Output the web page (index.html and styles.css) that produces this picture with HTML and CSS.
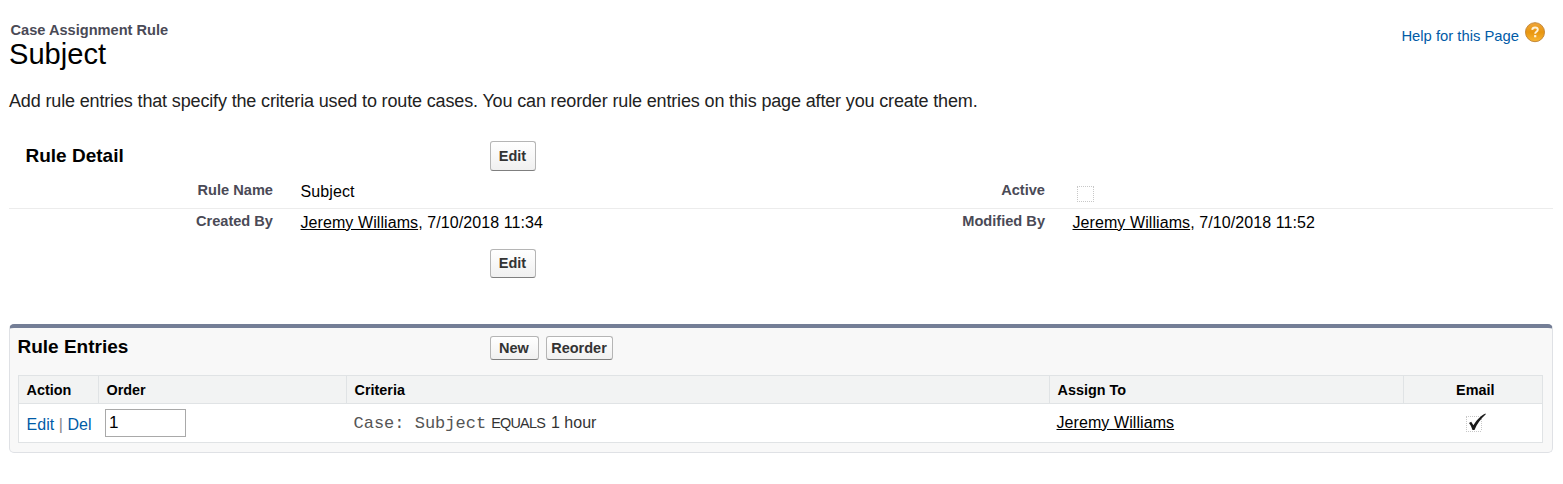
FILE: index.html
```html
<!DOCTYPE html>
<html lang="en">
<head>
<meta charset="utf-8">
<title>Case Assignment Rule: Subject</title>
<link rel="stylesheet" href="styles.css">
</head>
<body>
<header class="page-header">
  <div>
    <div class="page-type">Case Assignment Rule</div>
    <h1 class="page-title">Subject</h1>
  </div>
  <a class="help" href="#"><span class="help-text">Help for this Page</span>
    <svg class="help-icon" width="22" height="22" viewBox="0 0 22 22">
      <defs>
        <linearGradient id="orb" x1="0" y1="0" x2="0" y2="1">
          <stop offset="0" stop-color="#f0a63a"/><stop offset=".5" stop-color="#e8960f"/><stop offset="1" stop-color="#f9b634"/>
        </linearGradient>
      </defs>
      <circle cx="11" cy="11.2" r="9.5" fill="url(#orb)" stroke="#c4883a" stroke-width="1"/>
      <path d="M8.200 8.900C8.400 7.200 9.500 6.500 11 6.500c1.700 0 2.800.9 2.800 2.300 0 2-2.600 2-2.600 3.900" fill="none" stroke="#fff3da" stroke-width="1.900"/>
      <rect x="10.100" y="14.100" width="2.200" height="2.200" fill="#fff3da"/>
    </svg>
  </a>
</header>
<p class="intro">Add rule entries that specify the criteria used to route cases. You can reorder rule entries on this page after you create them.</p>

<section class="detail">
  <div class="detail-head">
    <h2 class="section-title">Rule Detail</h2>
    <button class="btn btn-edit">Edit</button>
  </div>
  <div class="detail-row ruled">
    <div class="label">Rule Name</div><div class="value subject">Subject</div>
    <div class="label">Active</div><div class="value">
      <svg class="box" width="17" height="16" viewBox="0 0 17 16"><path d="M0 .5H17M0 15.500H17M.5 1V15M16.500 1V15" class="dotted"/></svg>
    </div>
  </div>
  <div class="detail-row">
    <div class="label">Created By</div><div class="value dated"><a class="person" href="#">Jeremy Williams</a>, 7/10/2018 11:34</div>
    <div class="label">Modified By</div><div class="value dated"><a class="person" href="#">Jeremy Williams</a>, 7/10/2018 11:52</div>
  </div>
  <div class="detail-foot"><button class="btn btn-edit short">Edit</button></div>
</section>

<section class="panel">
  <div class="panel-head">
    <h2 class="section-title">Rule Entries</h2>
    <div class="panel-buttons">
      <button class="btn btn-new">New</button>
      <button class="btn btn-reorder">Reorder</button>
    </div>
  </div>
  <div class="entries">
    <div class="entry-row entry-head">
      <div class="cell">Action</div><div class="cell">Order</div><div class="cell">Criteria</div><div class="cell">Assign To</div><div class="cell email">Email</div>
    </div>
    <div class="entry-row entry-body">
      <div class="cell actions"><a href="#">Edit</a> | <a href="#">Del</a></div>
      <div class="cell order"><input class="order-input" type="text" value="1"></div>
      <div class="cell criteria"><span class="field">Case: Subject</span><span class="operator">EQUALS</span><span class="operand">1 hour</span></div>
      <div class="cell assign"><a class="person" href="#">Jeremy Williams</a></div>
      <div class="cell email check">
        <svg width="22" height="22" viewBox="0 0 22 22">
          <path d="M2 5.500H18M2 20.500H18M2.500 6V20M17.500 6V20" class="dotted"/>
          <path d="M5 12L7.200 10.800 9.400 14.200C12 9.800 16 4.800 21.500 2.400L21.800 3.200C16.800 7.500 13 13 10.500 18.900H8.500C7.500 16.200 6.500 13.700 5 12Z" fill="#1a1a1a"/>
        </svg>
      </div>
    </div>
  </div>
</section>
</body>
</html>
```
FILE: styles.css
```css
* { box-sizing: border-box; }
body {
  margin: 0;
  padding: 21px 10px 0 9px;
  background: #fff;
  color: #000;
  font: 16px/20px "Liberation Sans", Arial, sans-serif;
}
h1, h2, p { margin: 0; }
svg { display: block; }
.page-header { display: flex; justify-content: space-between; height: 69px; }
.page-type { padding-left: 1.500px; font-size: 14.6px; line-height: 18px; font-weight: bold; color: #4a4a56; }
.page-title { margin-top: -1px; font-size: 29.1px; line-height: 32px; font-weight: normal; }
.help { display: flex; height: 22px; gap: 5px; margin-right: 7px; color: #015ba7; text-decoration: none; }
.help-text { padding-top: 5px; font-size: 14.8px; line-height: 20px; }
.intro { height: 51px; font-size: 18px; line-height: 22px; letter-spacing: -0.149px; color: #222; }

.section-title { font-size: 19px; line-height: 22px; font-weight: bold; }
.btn {
  display: block;
  padding: 0 1px 0 0;
  border: 1px solid #b5b5b5;
  border-bottom-color: #7f7f7f;
  border-radius: 3px;
  background: linear-gradient(#fff, #f0f0f0);
  color: #333;
  font: bold 14.5px/20px "Liberation Sans", Arial, sans-serif;
}
.btn-edit { width: 46px; height: 30px; }
.btn-edit.short { height: 29px; padding-bottom: 2px; }
.btn-new { width: 49px; height: 24px; }
.btn-reorder { width: 67px; height: 24px; }

.detail-head { display: grid; grid-template-columns: 464.500px auto; justify-content: start; height: 37px; padding-left: 16.500px; }
.detail-head .section-title { padding-top: 4px; }
.detail-row { display: grid; grid-template-columns: 264px 508px 264px 1fr; height: 31px; }
.ruled { border-bottom: 1px solid #ececec; }
.label { padding-top: 3px; font-size: 14.6px; line-height: 18px; font-weight: bold; text-align: right; color: #4a4a56; }
.value { padding: 4px 0 0 27.500px; line-height: 20px; }
.subject { letter-spacing: 0.1px; }
.dated { letter-spacing: 0.08px; }
.person { color: #000; text-decoration: underline; letter-spacing: 0.08px; }
.box { margin: 4px 0 0 4.500px; }
.dotted { fill: none; stroke: #c8c8c8; stroke-dasharray: 1 1; shape-rendering: crispEdges; }
.detail-foot { padding: 9px 0 46px 481px; }

.panel {
  height: 129px;
  padding: 8px 9px 0 8px;
  border: 1px solid #dfe1e5;
  border-top: 4px solid #747e96;
  border-radius: 5px;
  background: #f8f8f8;
}
.panel-head { display: grid; grid-template-columns: 472.500px auto; justify-content: start; height: 39px; margin-left: -0.500px; }
.panel-buttons { display: flex; gap: 7px; }
.entries { border: 1px solid #e0e3e5; background: #fff; }
.entry-row { display: grid; grid-template-columns: 79px 249px 703px 354px 1fr; }
.entry-head { height: 28px; border-bottom: 1px solid #e0e3e5; background: #f2f3f3; font-size: 14.4px; line-height: 29px; font-weight: bold; }
.entry-head .cell { height: 27px; padding-left: 7.500px; border-right: 1px solid #e0e3e5; }
.entry-head .cell:first-child { border-right: 0; }
.entry-head .cell:nth-child(2) { border-left: 1px solid #e0e3e5; padding-left: 7.500px; }
.entry-head .email { padding-left: 4.500px; border-right: 0; text-align: center; }
.entry-body { height: 38px; line-height: 20px; }
.actions { padding: 11px 0 0 7.500px; color: #888; white-space: nowrap; letter-spacing: 0.05px; }
.actions a { color: #015ba7; text-decoration: none; }
.order { padding: 5px 0 0 7px; }
.order-input { display: block; width: 81px; height: 28px; margin: 0; padding: 0 3px 1px; border: 1px solid #a9a9a9; border-radius: 0; font: 17px "Liberation Sans", Arial, sans-serif; color: #000; }
.criteria { padding: 9px 0 0 6.500px; color: #333; white-space: nowrap; }
.field { font: 17px/20px "Liberation Mono", "Courier New", monospace; white-space: pre; color: #555; }
.operator { margin-left: 5px; font-size: 14.4px; letter-spacing: -0.750px; }
.operand { margin-left: 6px; }
.assign { padding: 9px 0 0 6.500px; }
.check { padding: 7px 0 0 60px; }
```
